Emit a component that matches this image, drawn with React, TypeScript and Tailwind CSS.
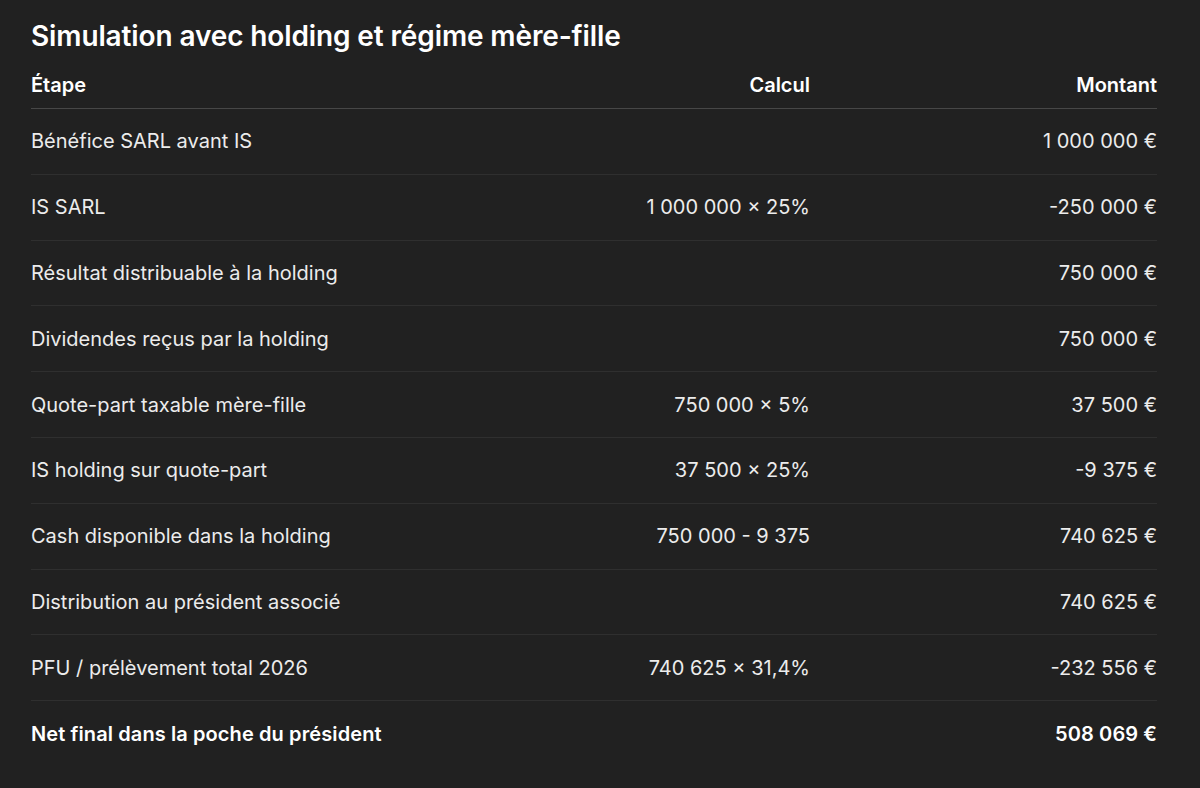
import React from "react";

const rows: { label: string; calc: string; amount: string; bold?: boolean }[] = [
  { label: "Bénéfice SARL avant IS", calc: "", amount: "1 000 000 €" },
  { label: "IS SARL", calc: "1 000 000 × 25%", amount: "-250 000 €" },
  { label: "Résultat distribuable à la holding", calc: "", amount: "750 000 €" },
  { label: "Dividendes reçus par la holding", calc: "", amount: "750 000 €" },
  { label: "Quote-part taxable mère-fille", calc: "750 000 × 5%", amount: "37 500 €" },
  { label: "IS holding sur quote-part", calc: "37 500 × 25%", amount: "-9 375 €" },
  { label: "Cash disponible dans la holding", calc: "750 000 - 9 375", amount: "740 625 €" },
  { label: "Distribution au président associé", calc: "", amount: "740 625 €" },
  { label: "PFU / prélèvement total 2026", calc: "740 625 × 31,4%", amount: "-232 556 €" },
  { label: "Net final dans la poche du président", calc: "", amount: "508 069 €", bold: true },
];

export default function App() {
  return (
    <div
      className="w-[1200px] h-[788px] bg-[#212121] text-[#ececec] px-[31px] pt-[18px] overflow-hidden"
      style={{ fontFamily: "Inter, 'Noto Sans', sans-serif" }}
    >
      <h1 className="text-[28px] leading-[36px] font-semibold text-white tracking-[-0.12px]">
        Simulation avec holding et régime mère-fille
      </h1>
      <div className="mt-[8px] w-[1126px]">
        <div className="flex items-center h-[47px] border-b border-[#474747] text-[20px] font-semibold text-white">
          <div className="flex-1">Étape</div>
          <div className="w-[400px] text-right">Calcul</div>
          <div className="w-[347px] text-right">Montant</div>
        </div>
        {rows.map((r, i) => (
          <div
            key={i}
            className={`flex items-center h-[65.8px] text-[20px] ${
              i < rows.length - 1 ? "border-b border-[#2f2f2f]" : ""
            } ${r.bold ? "font-semibold text-white tracking-[0.1px]" : ""}`}
          >
            <div className="flex-1">{r.label}</div>
            <div className="w-[400px] text-right">{r.calc}</div>
            <div className="w-[347px] text-right">{r.amount}</div>
          </div>
        ))}
      </div>
    </div>
  );
}
